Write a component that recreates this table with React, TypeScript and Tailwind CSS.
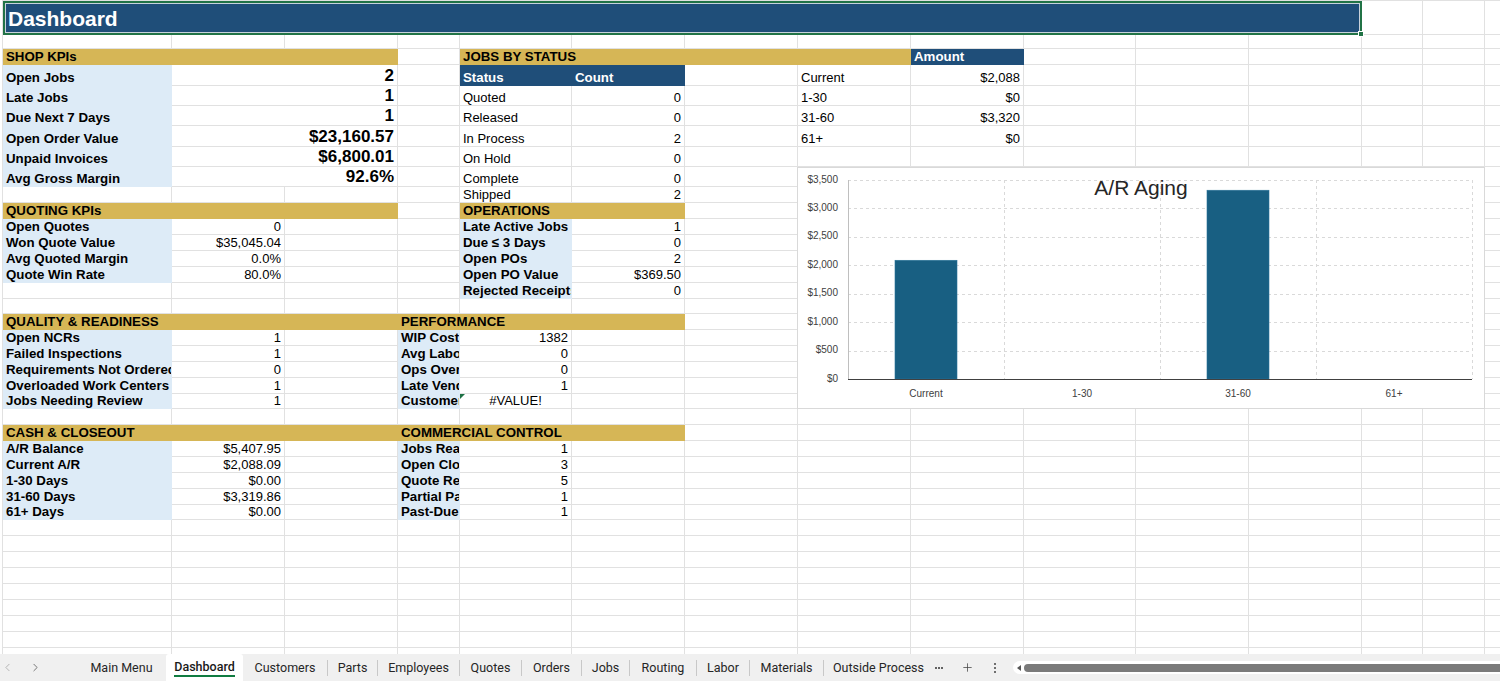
import React from 'react';
import { ChevronLeft, ChevronRight, Plus } from 'lucide-react';

type Kind = 'e' | 'gold' | 'hdr' | 'label' | 'val' | 'big' | 'txt' | 'err' | 'title';
type Cell = { k: Kind; t?: string; s?: number };

const SPAN: Record<number, string> = {
  1: 'col-span-1',
  2: 'col-span-2',
  3: 'col-span-3',
  4: 'col-span-4',
  12: 'col-span-12',
};

const BASE = 'relative flex items-end overflow-hidden whitespace-nowrap border-r border-b';
const KIND: Record<Kind, string> = {
  e: 'border-[#E1E1E1] bg-white',
  title: '',
  gold: 'border-[#D6B656] bg-[#D6B656] pl-[3px] text-[13.3px] leading-[15px] font-bold text-black',
  hdr: 'border-[#1F4E79] bg-[#1F4E79] pl-[3px] text-[13.3px] leading-[15px] font-bold text-white',
  label: 'border-[#DDEBF7] bg-[#DDEBF7] pl-[3px] text-[13.3px] leading-[15px] font-bold text-black',
  val: 'border-[#E1E1E1] bg-white justify-end pr-[3px] text-[13px] leading-[15px] text-black',
  big: 'border-[#E1E1E1] bg-white justify-end pr-[3px] text-[17px] leading-[19px] font-bold text-black',
  txt: 'border-[#E1E1E1] bg-white pl-[3px] text-[13px] leading-[15px] text-black',
  err: 'border-[#E1E1E1] bg-white justify-center text-[13px] leading-[15px] text-black',
};

const E: Cell = { k: 'e' };
const es = (n: number): Cell[] => Array.from({ length: n }, () => E);
const gold = (t: string, s: number): Cell => ({ k: 'gold', t, s });
const hdr = (t: string): Cell => ({ k: 'hdr', t });
const label = (t: string): Cell => ({ k: 'label', t });
const val = (t: string): Cell => ({ k: 'val', t });
const big = (t: string): Cell => ({ k: 'big', t, s: 2 });
const txt = (t: string): Cell => ({ k: 'txt', t });

const ROWS: Cell[][] = [
  [{ k: 'title', s: 12 }, ...es(3)],
  es(15),
  [gold('SHOP KPIs', 3), E, gold('JOBS BY STATUS', 4), hdr('Amount'), ...es(6)],
  [label('Open Jobs'), big('2'), E, hdr('Status'), hdr('Count'), E, txt('Current'), val('$2,088'), ...es(6)],
  [label('Late Jobs'), big('1'), E, txt('Quoted'), val('0'), E, txt('1-30'), val('$0'), ...es(6)],
  [label('Due Next 7 Days'), big('1'), E, txt('Released'), val('0'), E, txt('31-60'), val('$3,320'), ...es(6)],
  [label('Open Order Value'), big('$23,160.57'), E, txt('In Process'), val('2'), E, txt('61+'), val('$0'), ...es(6)],
  [label('Unpaid Invoices'), big('$6,800.01'), E, txt('On Hold'), val('0'), ...es(9)],
  [label('Avg Gross Margin'), big('92.6%'), E, txt('Complete'), val('0'), ...es(9)],
  [...es(4), txt('Shipped'), val('2'), ...es(9)],
  [gold('QUOTING KPIs', 3), E, gold('OPERATIONS', 2), ...es(9)],
  [label('Open Quotes'), val('0'), E, E, label('Late Active Jobs'), val('1'), ...es(9)],
  [label('Won Quote Value'), val('$35,045.04'), E, E, label('Due ≤ 3 Days'), val('0'), ...es(9)],
  [label('Avg Quoted Margin'), val('0.0%'), E, E, label('Open POs'), val('2'), ...es(9)],
  [label('Quote Win Rate'), val('80.0%'), E, E, label('Open PO Value'), val('$369.50'), ...es(9)],
  [...es(4), label('Rejected Receipts'), val('0'), ...es(9)],
  es(15),
  [gold('QUALITY & READINESS', 3), gold('PERFORMANCE', 3), ...es(9)],
  [label('Open NCRs'), val('1'), E, label('WIP Cost'), val('1382'), ...es(10)],
  [label('Failed Inspections'), val('1'), E, label('Avg Labor Variance'), val('0'), ...es(10)],
  [label('Requirements Not Ordered'), val('0'), E, label('Ops Over Estimate'), val('0'), ...es(10)],
  [label('Overloaded Work Centers'), val('1'), E, label('Late Vendor POs'), val('1'), ...es(10)],
  [label('Jobs Needing Review'), val('1'), E, label('Customer'), { k: 'err', t: '#VALUE!' }, ...es(10)],
  es(15),
  [gold('CASH & CLOSEOUT', 3), gold('COMMERCIAL CONTROL', 3), ...es(9)],
  [label('A/R Balance'), val('$5,407.95'), E, label('Jobs Ready to Invoice'), val('1'), ...es(10)],
  [label('Current A/R'), val('$2,088.09'), E, label('Open Closeouts'), val('3'), ...es(10)],
  [label('1-30 Days'), val('$0.00'), E, label('Quote Revisions'), val('5'), ...es(10)],
  [label('31-60 Days'), val('$3,319.86'), E, label('Partial Payments'), val('1'), ...es(10)],
  [label('61+ Days'), val('$0.00'), E, label('Past-Due Invoices'), val('1'), ...es(10)],
  es(15),
  es(15),
  es(15),
  es(15),
  es(15),
  es(15),
  es(15),
  es(15),
  es(15),
];

function TitleCell() {
  return (
    <div className="relative col-span-12 flex">
      <div className="relative h-[34px] w-full border-2 border-[#217346]">
        <div className="flex h-full w-full items-center border border-[#C9D2DC] bg-[#1F4E79] pl-[2px]">
          <span className="text-[21px] font-bold leading-none text-white">Dashboard</span>
        </div>
        <div className="absolute bottom-[-4px] right-[-4px] z-10 h-[6px] w-[6px] border border-white bg-[#217346]" />
      </div>
    </div>
  );
}

function SheetCell({ c }: { c: Cell }) {
  if (c.k === 'title') return <TitleCell />;
  return (
    <div className={`${BASE} ${SPAN[c.s ?? 1]} ${KIND[c.k]}`}>
      {c.k === 'err' && (
        <div className="absolute left-0 top-0 h-0 w-0 border-r-[5px] border-t-[5px] border-r-transparent border-t-[#1E7145]" />
      )}
      {c.t}
    </div>
  );
}

function Chart() {
  const top = 12;
  const bottom = 211;
  const left = 50;
  const right = 674;
  const step = (bottom - top) / 7;
  const yl = ['$3,500', '$3,000', '$2,500', '$2,000', '$1,500', '$1,000', '$500', '$0'];
  const cats = ['Current', '1-30', '31-60', '61+'];
  const vals = [2088, 0, 3320, 0];
  const cw = (right - left) / 4;
  const font = "'Liberation Sans', Arial, sans-serif";
  return (
    <svg width={686} height={240} className="block">
      {yl.slice(0, 7).map((_, i) => (
        <line
          key={`h${i}`}
          x1={left}
          x2={right}
          y1={Math.round(top + i * step) + 0.5}
          y2={Math.round(top + i * step) + 0.5}
          stroke="#D9D9D9"
          strokeDasharray="3 3"
        />
      ))}
      {[1, 2, 3, 4].map((k) => (
        <line
          key={`v${k}`}
          x1={Math.round(left + k * cw) + 0.5}
          x2={Math.round(left + k * cw) + 0.5}
          y1={top}
          y2={bottom}
          stroke="#D9D9D9"
          strokeDasharray="3 3"
        />
      ))}
      <line x1={left + 0.5} x2={left + 0.5} y1={top} y2={bottom} stroke="#BFBFBF" />
      {vals.map((v, i) => {
        const h = ((bottom - top) * v) / 3500;
        const cx = left + cw * (i + 0.5);
        return v > 0 ? (
          <rect key={`b${i}`} x={cx - 31} y={bottom - h} width={62} height={h} fill="#185F82" stroke="#2A7399" strokeWidth={0.6} />
        ) : null;
      })}
      <line x1={left} x2={right} y1={bottom + 0.5} y2={bottom + 0.5} stroke="#404040" strokeWidth={1.2} />
      {yl.map((l, i) => (
        <text
          key={`yl${i}`}
          x={40}
          y={top + i * step}
          textAnchor="end"
          dominantBaseline="middle"
          fontSize={10}
          fill="#404040"
          fontFamily={font}
        >
          {l}
        </text>
      ))}
      {cats.map((c, i) => (
        <text
          key={`c${i}`}
          x={left + cw * (i + 0.5)}
          y={226}
          textAnchor="middle"
          dominantBaseline="middle"
          fontSize={10}
          fill="#404040"
          fontFamily={font}
        >
          {c}
        </text>
      ))}
      <text x={343} y={21} textAnchor="middle" dominantBaseline="middle" fontSize={21} fill="#262626" fontFamily={font}>
        A/R Aging
      </text>
    </svg>
  );
}

const TABS = [
  { t: 'Main Menu', w: 'w-[89px]', sep: false, active: false },
  { t: 'Dashboard', w: 'w-[77px]', sep: false, active: true },
  { t: 'Customers', w: 'w-[84px]', sep: false, active: false },
  { t: 'Parts', w: 'w-[49px]', sep: true, active: false },
  { t: 'Employees', w: 'w-[81px]', sep: true, active: false },
  { t: 'Quotes', w: 'w-[61px]', sep: true, active: false },
  { t: 'Orders', w: 'w-[59px]', sep: true, active: false },
  { t: 'Jobs', w: 'w-[47px]', sep: true, active: false },
  { t: 'Routing', w: 'w-[66px]', sep: true, active: false },
  { t: 'Labor', w: 'w-[52px]', sep: true, active: false },
  { t: 'Materials', w: 'w-[73px]', sep: true, active: false },
  { t: 'Outside Process', w: 'w-[109px]', sep: true, active: false },
];

function TabBar() {
  return (
    <div className="flex h-[27px] items-center bg-[#F0F0F0] font-['Roboto','Noto_Sans',sans-serif] text-[12.5px] text-[#262626]">
      <div className="flex h-full w-[77px] items-center pl-[1px]">
        <ChevronLeft size={13} strokeWidth={1.5} color="#A6A6A6" />
        <div className="ml-[15px] flex">
          <ChevronRight size={13} strokeWidth={1.5} color="#5A5A5A" />
        </div>
      </div>
      {TABS.map((tab) => (
        <React.Fragment key={tab.t}>
          {tab.sep && <div className="h-[16px] w-px bg-[#C8C8C8]" />}
          {tab.active ? (
            <div className={`${tab.w} flex h-full items-center justify-center rounded-t-[3px] bg-white`}>
              <span className="border-b-2 border-[#107C41] font-medium leading-[16px] text-[#1A1A1A]">{tab.t}</span>
            </div>
          ) : (
            <div className={`${tab.w} flex h-full items-center justify-center`}>
              <span className="leading-[16px]">{tab.t}</span>
            </div>
          )}
        </React.Fragment>
      ))}
      <div className="flex w-[12px] items-center justify-center gap-[1px]">
        <div className="h-[2px] w-[2px] rounded-full bg-[#333]" />
        <div className="h-[2px] w-[2px] rounded-full bg-[#333]" />
        <div className="h-[2px] w-[2px] rounded-full bg-[#333]" />
      </div>
      <div className="flex w-[44px] items-center justify-center">
        <Plus size={13} strokeWidth={1.4} color="#444" />
      </div>
      <div className="flex w-[12px] flex-col items-center justify-center gap-[2px]">
        <div className="h-[2px] w-[2px] rounded-full bg-[#444]" />
        <div className="h-[2px] w-[2px] rounded-full bg-[#444]" />
        <div className="h-[2px] w-[2px] rounded-full bg-[#444]" />
      </div>
      <div className="ml-[12px] flex h-[13px] flex-1 items-center rounded-l-full bg-white pl-[4px]">
        <div className="h-0 w-0 border-y-[3px] border-r-[4px] border-y-transparent border-r-[#555]" />
        <div className="ml-[3px] h-[8px] flex-1 rounded-l-full bg-[#7A7A7A]" />
      </div>
    </div>
  );
}

export default function App() {
  return (
    <div className="flex h-[681px] w-[1500px] flex-col overflow-hidden bg-white font-['Liberation_Sans',Arial,sans-serif]">
      <div className="relative h-[654px] overflow-hidden pl-[2px]">
        <div className="grid w-max grid-cols-[169px_113px_113px_62px_112px_113px_113px_113px_113px_112px_113px_113px_61px_62px_200px] grid-rows-[34px_14px_16px_21px_20px_20px_21px_20px_20px_16px_16px_16px_16px_16px_16px_16px_15px_16px_16px_16px_16px_16px_15px_16px_16px_16px_16px_16px_16px_15px_16px_16px_16px_16px_16px_16px_16px_16px_16px] border-l border-t border-[#E1E1E1]">
          {ROWS.map((row, ri) => row.map((c, ci) => <SheetCell key={`${ri}-${ci}`} c={c} />))}
        </div>
        <div className="absolute left-[797px] top-[167px] h-[242px] w-[688px] border border-[#D9D9D9] bg-white">
          <Chart />
        </div>
      </div>
      <TabBar />
    </div>
  );
}
